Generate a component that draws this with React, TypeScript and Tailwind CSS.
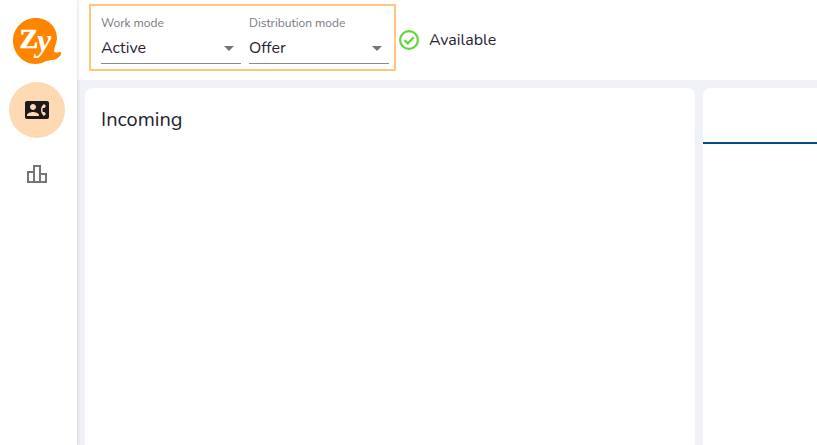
const font = { fontFamily: 'Nunito, Lato, "Noto Sans", sans-serif' };

function Logo() {
  return (
    <svg width="50" height="48" viewBox="0 0 50 48" className="block">
      <path
        d="M23 0C35 0 44 9 44 20C44 25 41 29 41 33C42 36 46 34 47 34C49 34 48 37 47 38C43 43 36 42 33 43C30 45 26 46 22 46C10 46 0 35 0 23C0 10 10 0 23 0z"
        fill="#ff8400"
      />
      <text x="6.5" y="30" fill="#fff" stroke="#fff" strokeWidth="0.6" fontFamily="Liberation Serif, serif" fontWeight="700" fontSize="28">Z</text>
      <text x="24" y="33" fill="#fff" fontFamily="Liberation Serif, serif" fontWeight="700" fontStyle="italic" fontSize="32">y</text>
    </svg>
  );
}

function ModeSelect({ label, value }: { label: string; value: string }) {
  return (
    <div className="w-[140px]">
      <div className="text-[12px] leading-[16px] text-[#77777f]">{label}</div>
      <div className="mt-[5px] flex h-[28px] items-center justify-between border-b border-[#8a8a8a] pb-[4px] pr-[7px]">
        <span className="text-[16px] text-[#1f2430]">{value}</span>
        <span className="mt-[2px] h-0 w-0 border-x-[5px] border-t-[5px] border-x-transparent border-t-[#757575]" />
      </div>
    </div>
  );
}

export default function App() {
  return (
    <div className="flex h-[445px] w-[817px] overflow-hidden bg-[#f1f2f8]" style={font}>
      <aside className="z-10 flex w-[77px] shrink-0 flex-col bg-white pl-[9px] pt-[18px] shadow-[1px_0_3px_rgba(0,0,0,0.12)]">
        <div className="pl-[4px]">
          <Logo />
        </div>
        <div className="mt-[16px] flex h-[56px] w-[56px] items-center justify-center rounded-full bg-[#ffd9b3]">
          <svg width="24" height="24" viewBox="0 0 24 24" fill="#1c1a1a">
            <path d="M22 3H2C.9 3 0 3.9 0 5v14c0 1.1.9 2 2 2h20c1.1 0 1.99-.9 1.99-2L24 5c0-1.1-.9-2-2-2zM8 6c1.66 0 3 1.34 3 3s-1.34 3-3 3-3-1.34-3-3 1.34-3 3-3zm6 12H2v-1c0-2 4-3.1 6-3.1s6 1.1 6 3.1v1zm3.85-4h1.64L21 16l-1.99 1.99c-1.31-.98-2.28-2.38-2.73-3.99-.18-.64-.28-1.31-.28-2s.1-1.36.28-2c.45-1.62 1.42-3.01 2.73-3.99L21 8l-1.51 2h-1.64c-.22.63-.35 1.3-.35 2s.13 1.37.35 2z" />
          </svg>
        </div>
        <div className="ml-[16px] mt-[24px]">
          <svg width="24" height="24" viewBox="0 0 24 24" fill="#757575" className="block">
            <path d="M16 11V3H8v6H2v12h20V11h-6zm-6-6h4v14h-4V5zm-6 6h4v8H4v-8zm16 8h-4v-6h4v6z" />
          </svg>
        </div>
      </aside>

      <div className="flex min-w-0 flex-1 flex-col">
        <header className="flex h-[80px] shrink-0 items-start bg-white pl-[12px] pt-[4px]">
          <div className="flex h-[67px] w-[307px] gap-[8px] border-2 border-[#ffc680] pl-[10px] pt-[9px]">
            <ModeSelect label="Work mode" value="Active" />
            <ModeSelect label="Distribution mode" value="Offer" />
          </div>
          <div className="ml-[3px] mt-[24px] flex items-center gap-[10px]">
            <svg width="20" height="20" viewBox="0 0 20 20" fill="none" stroke="#63d43c" strokeWidth="2.2">
              <circle cx="10" cy="10" r="8.9" />
              <path d="M5.5 10.2l3.2 3.2 6-6.2" />
            </svg>
            <span className="text-[16px] text-[#1f2430]">Available</span>
          </div>
        </header>

        <main className="flex min-h-0 flex-1 gap-[8px] pl-[8px] pt-[8px]">
          <section className="w-[610px] shrink-0 rounded-t-[8px] bg-white px-[16px] pt-[18px]">
            <h2 className="text-[20px] leading-[27px] text-[#1f2430]">Incoming</h2>
          </section>
          <section className="min-w-0 flex-1 rounded-tl-[8px] bg-white pt-[54px]">
            <div className="h-[2px] bg-[#004f7f]" />
          </section>
        </main>
      </div>
    </div>
  );
}
